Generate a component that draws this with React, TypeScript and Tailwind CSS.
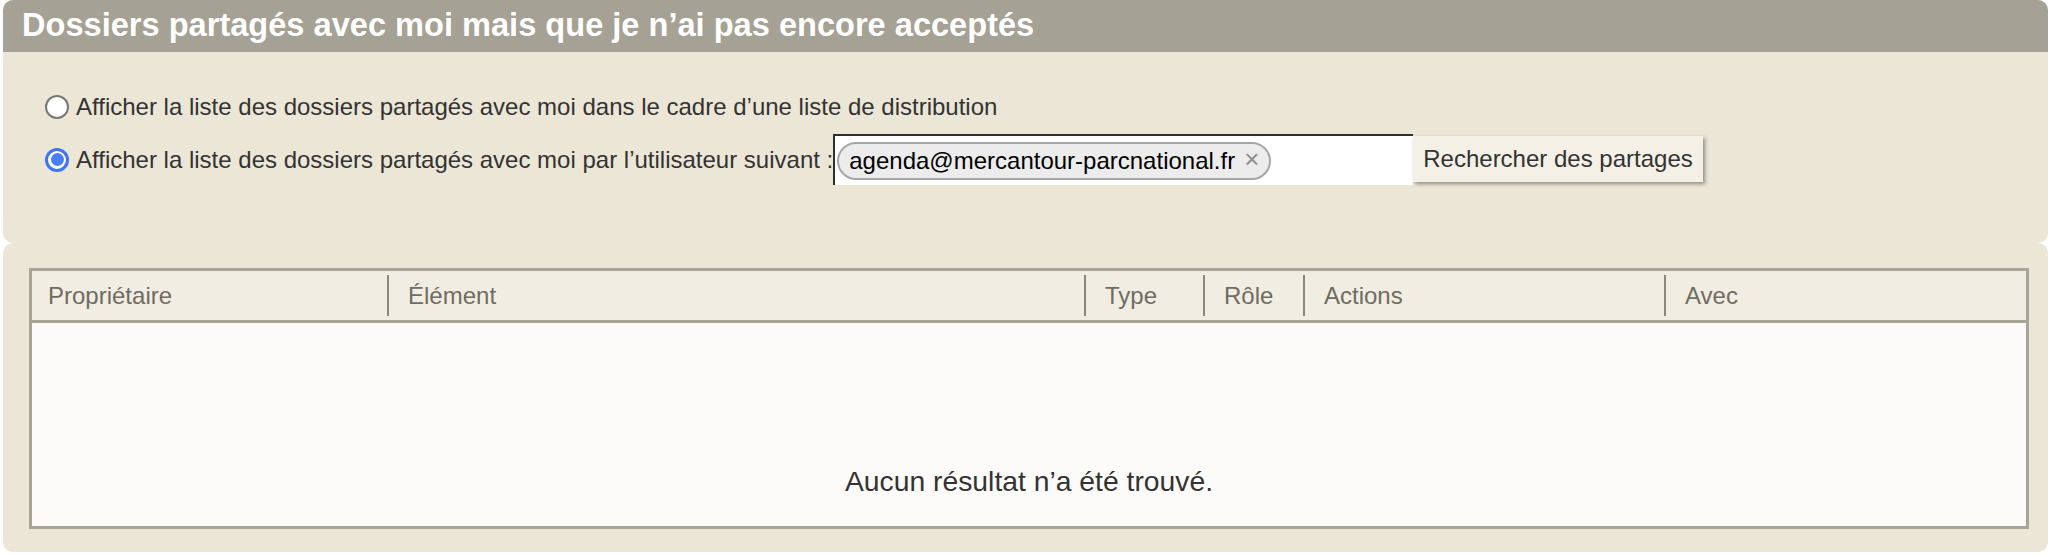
import React from "react";

function Radio({ checked }: { checked?: boolean }) {
  if (checked) {
    return (
      <div className="w-[24px] h-[24px] rounded-full border-[3px] border-[#3f75f4] bg-white flex items-center justify-center shrink-0">
        <div className="w-[13px] h-[13px] rounded-full bg-[#4a7df8]" />
      </div>
    );
  }
  return <div className="w-[24px] h-[24px] rounded-full border-2 border-[#777777] bg-white shrink-0" />;
}

function HeadCell({ label, first }: { label: string; first?: boolean }) {
  return (
    <div className="flex items-stretch h-full">
      {!first && <div className="w-[2px] my-[4px] bg-[#8a877c] shrink-0" />}
      <div className={(first ? "pl-[16px]" : "pl-[19px]") + " flex items-center text-[24px] text-[#6f6c61] whitespace-nowrap"}>
        {label}
      </div>
    </div>
  );
}

export default function App() {
  return (
    <div className="w-[2051px] h-[554px] bg-white font-['Liberation_Sans',Arial,sans-serif] text-[#333333]">
      <div className="mx-[3px] rounded-[10px] bg-[#ece6d6] h-[243px]">
        <div className="h-[52px] bg-[#a5a194] rounded-t-[10px] pl-[19px] text-white font-bold text-[32.6px] leading-[50px] whitespace-nowrap">
          Dossiers partagés avec moi mais que je n’ai pas encore acceptés
        </div>
        <div className="pt-[41px] pl-[42px] flex flex-col gap-[13px]">
          <div className="flex items-center h-[28px] gap-[7px] text-[24px] leading-[28px] whitespace-nowrap">
            <Radio />
            <span>Afficher la liste des dossiers partagés avec moi dans le cadre d’une liste de distribution</span>
          </div>
          <div className="flex items-center h-[51px] text-[24px] leading-[28px] whitespace-nowrap">
            <Radio checked />
            <span className="ml-[7px]">Afficher la liste des dossiers partagés avec moi par l’utilisateur suivant :</span>
            <div className="w-[580px] h-[51px] bg-white border-t-2 border-l-2 border-[#2f2f2f] flex items-center pl-[2px] shrink-0">
              <div className="flex items-center h-[38px] rounded-full border-2 border-[#a6a6a6] bg-[#ececec] pl-[10px] pr-[10px] gap-[9px]">
                <span className="text-black text-[24px] leading-[28px]">agenda@mercantour-parcnational.fr</span>
                <span className="text-[#8d8d8d] text-[26px] leading-[26px] -mt-[4px]">×</span>
              </div>
            </div>
            <div className="h-[46px] -mt-[2px] px-[10px] flex items-center bg-[#f4f0e6] text-[24px] text-[#333333] shadow-[2px_2px_4px_rgba(0,0,0,0.4)] shrink-0">
              Rechercher des partages
            </div>
          </div>
        </div>
      </div>
      <div className="mx-[3px] rounded-[10px] bg-[#ece6d6] pt-[25px] pl-[26px] pr-[19px] pb-[23px]">
        <div className="border-[3px] border-[#a8a597] bg-[#fcfbf9]">
          <div className="grid grid-cols-[355px_697px_119px_100px_361px_1fr] h-[49px] bg-[#f1ede3] border-b-[3px] border-[#a8a597] box-content">
            <HeadCell label="Propriétaire" first />
            <HeadCell label="Élément" />
            <HeadCell label="Type" />
            <HeadCell label="Rôle" />
            <HeadCell label="Actions" />
            <HeadCell label="Avec" />
          </div>
          <div className="h-[203px] flex items-end justify-center pb-[29px] text-[28.3px] leading-[32px] text-[#333333]">
            Aucun résultat n’a été trouvé.
          </div>
        </div>
      </div>
    </div>
  );
}
